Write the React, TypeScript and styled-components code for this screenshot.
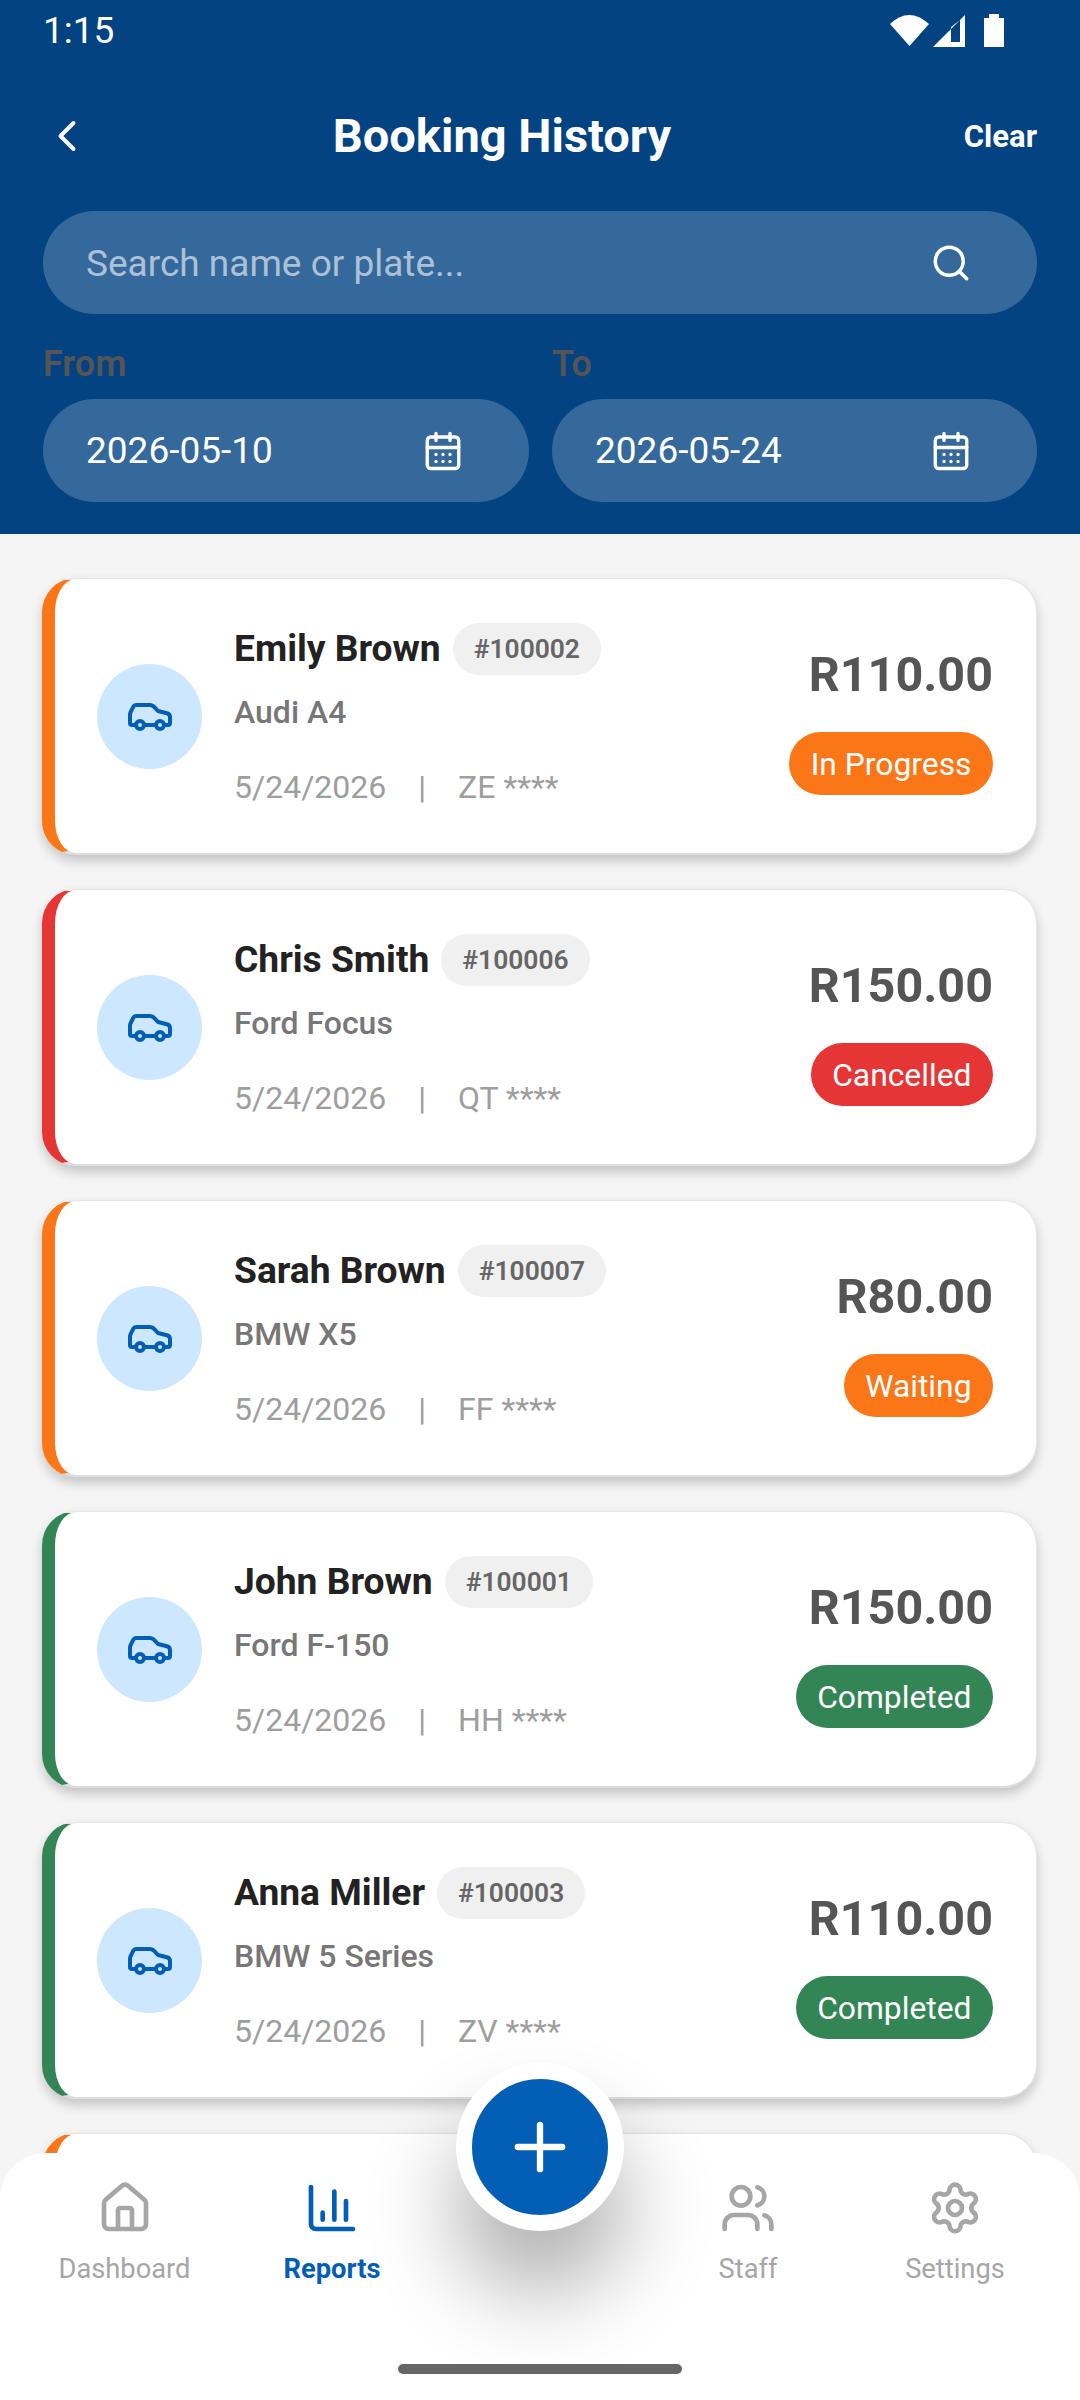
import React from "react";
import styled, { createGlobalStyle } from "styled-components";
import { Car, ChevronLeft, Search, CalendarDays, House, ChartColumn, Users, Settings, Plus } from "lucide-react";

const Global = createGlobalStyle`
  html, body { margin: 0; padding: 0; background: #f5f5f5; }
  * { box-sizing: border-box; }
`;

const Screen = styled.div`
  position: relative;
  width: 1080px;
  height: 2400px;
  overflow: hidden;
  background: #f5f5f5;
  font-family: Roboto, "Noto Sans", sans-serif;
`;

const Header = styled.header`
  height: 534px;
  background: #034382;
  padding: 0 43px;
  display: flex;
  flex-direction: column;
`;

const StatusBar = styled.div`
  height: 60px;
  display: flex;
  align-items: center;
  justify-content: space-between;
  color: #fff;
  font-size: 37px;
  padding-right: 32px;
`;

const TitleRow = styled.div`
  margin-top: 47px;
  height: 58px;
  display: grid;
  grid-template-columns: 1fr auto 1fr;
  align-items: center;
`;

const BackButton = styled.div`
  color: #fff;
  display: flex;
  align-items: center;
  margin-left: -2px;
`;

const Title = styled.h1`
  margin: 0 0 0 -76px;
  color: #fff;
  font-size: 47px;
  font-weight: 700;
  line-height: 58px;
`;

const ClearLink = styled.div`
  justify-self: end;
  color: #fff;
  font-size: 31px;
  font-weight: 700;
`;

const Field = styled.div<{ $mt?: number }>`
  height: 103px;
  margin-top: ${(p) => p.$mt ?? 0}px;
  border-radius: 52px;
  background: rgba(255, 255, 255, 0.2);
  display: flex;
  align-items: center;
  justify-content: space-between;
  padding: 0 65px 0 43px;
  color: #fff;
  font-size: 37px;
`;

const Placeholder = styled.span`
  padding-top: 2px;
  color: rgba(255, 255, 255, 0.6);
`;

const DateGrid = styled.div`
  margin-top: 30px;
  display: grid;
  grid-template-columns: 486px 485px;
  column-gap: 23px;
`;

const DateLabel = styled.div`
  height: 55px;
  color: #555555;
  font-size: 36px;
  font-weight: 600;
  line-height: 40px;
`;

const CardList = styled.div`
  padding: 44px 43px 0 42px;
  display: flex;
  flex-direction: column;
  gap: 34px;
`;

const Card = styled.article<{ $tone: string }>`
  height: 277px;
  flex: none;
  display: flex;
  align-items: center;
  background: #fff;
  border: 1px solid #e6e6e6;
  border-bottom: 2px solid #dddddd;
  border-left: 13px solid ${(p) => p.$tone};
  border-radius: 34px;
  box-shadow: 0 6px 12px rgba(0, 0, 0, 0.2);
  padding: 0 43px 0 42px;
`;

const CarCircle = styled.div`
  width: 105px;
  height: 105px;
  flex: none;
  padding-bottom: 2px;
  border-radius: 50%;
  background: #cde7ff;
  color: #035eb5;
  display: flex;
  align-items: center;
  justify-content: center;
`;

const CardBody = styled.div`
  flex: 1;
  margin-left: 32px;
  display: flex;
  flex-direction: column;
`;

const NameRow = styled.div`
  height: 52px;
  display: flex;
  align-items: center;
  gap: 12px;
`;

const Name = styled.span`
  padding-bottom: 2px;
  color: #222222;
  font-size: 37.2px;
  font-weight: 700;
`;

const IdChip = styled.span`
  height: 52px;
  padding: 0 21px;
  border-radius: 26px;
  background: #f0f0f0;
  color: #666666;
  font-size: 26.4px;
  font-weight: 600;
  display: flex;
  align-items: center;
`;

const Vehicle = styled.div`
  margin-top: 16px;
  color: #777777;
  font-size: 32px;
  font-weight: 500;
  line-height: 42px;
`;

const Meta = styled.div`
  margin-top: 31px;
  color: #9e9e9e;
  font-size: 32px;
  line-height: 46px;
  white-space: pre;
`;

const Separator = styled.span`
  margin: 0 32px;
`;

const PriceCol = styled.div`
  display: flex;
  flex-direction: column;
  align-items: flex-end;
`;

const Price = styled.div`
  color: #555555;
  font-size: 48.5px;
  font-weight: 700;
  line-height: 76px;
  margin-bottom: 19px;
`;

const Badge = styled.div<{ $tone: string }>`
  height: 63px;
  padding: 0 21.5px;
  border-radius: 32px;
  background: ${(p) => p.$tone};
  color: #fff;
  font-size: 31.8px;
  display: flex;
  align-items: center;
`;

const BottomNav = styled.nav`
  position: absolute;
  left: 0;
  right: 0;
  bottom: 0;
  height: 247px;
  background: #fff;
  border-radius: 46px 46px 0 0;
  display: grid;
  grid-template-columns: 249px 166px 251px 164px 250px;
  align-items: start;
  padding-top: 27px;
`;

const NavItem = styled.div<{ $active?: boolean }>`
  display: flex;
  flex-direction: column;
  align-items: center;
  color: ${(p) => (p.$active ? "#035eb5" : "#a6a6a6")};
  font-size: 27.3px;
  font-weight: ${(p) => (p.$active ? 700 : 400)};
  line-height: 32px;
  gap: 17px;
`;

const Fab = styled.div`
  position: absolute;
  left: 456px;
  top: 2063px;
  width: 168px;
  height: 168px;
  border-radius: 50%;
  border: 16px solid #fff;
  background: #035eb5;
  color: #fff;
  display: flex;
  align-items: center;
  justify-content: center;
  box-shadow: 0 60px 90px rgba(0, 0, 0, 0.32);
`;

const HomeBar = styled.div`
  position: absolute;
  left: 398px;
  top: 2364px;
  width: 284px;
  height: 10px;
  border-radius: 5px;
  background: #666666;
`;

const StatusIcons = () => (
  <svg width="115" height="36" viewBox="0 0 115 36" fill="#fff">
    <path d="M0 12 Q19 -6 39 12 L19.5 34 Z" />
    <path fillRule="evenodd" d="M43 35 L75 3 V35 Z M61 15 V30 H70 V8 Z" />
    <path d="M99 2 H109 V6 H114 V35 H94 V6 H99 Z" />
  </svg>
);

const ORANGE = "#fb7617";
const RED = "#e53535";
const GREEN = "#348555";

const bookings = [
  { name: "Emily Brown", id: "#100002", car: "Audi A4", plate: "ZE ****", price: "R110.00", status: "In Progress", tone: ORANGE },
  { name: "Chris Smith", id: "#100006", car: "Ford Focus", plate: "QT ****", price: "R150.00", status: "Cancelled", tone: RED },
  { name: "Sarah Brown", id: "#100007", car: "BMW X5", plate: "FF ****", price: "R80.00", status: "Waiting", tone: ORANGE },
  { name: "John Brown", id: "#100001", car: "Ford F-150", plate: "HH ****", price: "R150.00", status: "Completed", tone: GREEN },
  { name: "Anna Miller", id: "#100003", car: "BMW 5 Series", plate: "ZV ****", price: "R110.00", status: "Completed", tone: GREEN },
];

export default function App() {
  return (
    <Screen>
      <Global />
      <Header>
        <StatusBar>
          <span>1:15</span>
          <StatusIcons />
        </StatusBar>
        <TitleRow>
          <BackButton><ChevronLeft size={52} strokeWidth={1.8} /></BackButton>
          <Title>Booking History</Title>
          <ClearLink>Clear</ClearLink>
        </TitleRow>
        <Field $mt={46}>
          <Placeholder>Search name or plate...</Placeholder>
          <Search size={42} strokeWidth={2} />
        </Field>
        <DateGrid>
          <DateLabel>From</DateLabel>
          <DateLabel>To</DateLabel>
          <Field>2026-05-10<CalendarDays size={42} strokeWidth={1.9} /></Field>
          <Field>2026-05-24<CalendarDays size={42} strokeWidth={1.9} /></Field>
        </DateGrid>
      </Header>
      <CardList>
        {bookings.map((b) => (
          <Card key={b.id} $tone={b.tone}>
            <CarCircle><Car size={48} strokeWidth={2} /></CarCircle>
            <CardBody>
              <NameRow>
                <Name>{b.name}</Name>
                <IdChip>{b.id}</IdChip>
              </NameRow>
              <Vehicle>{b.car}</Vehicle>
              <Meta>5/24/2026<Separator>|</Separator>{b.plate}</Meta>
            </CardBody>
            <PriceCol>
              <Price>{b.price}</Price>
              <Badge $tone={b.tone}>{b.status}</Badge>
            </PriceCol>
          </Card>
        ))}
        <Card $tone={ORANGE} />
      </CardList>
      <BottomNav>
        <NavItem><House size={56} strokeWidth={2} />Dashboard</NavItem>
        <NavItem $active><ChartColumn size={56} strokeWidth={2} />Reports</NavItem>
        <span />
        <NavItem><Users size={56} strokeWidth={2} />Staff</NavItem>
        <NavItem><Settings size={56} strokeWidth={2} />Settings</NavItem>
      </BottomNav>
      <Fab><Plus size={76} strokeWidth={2} /></Fab>
      <HomeBar />
    </Screen>
  );
}
